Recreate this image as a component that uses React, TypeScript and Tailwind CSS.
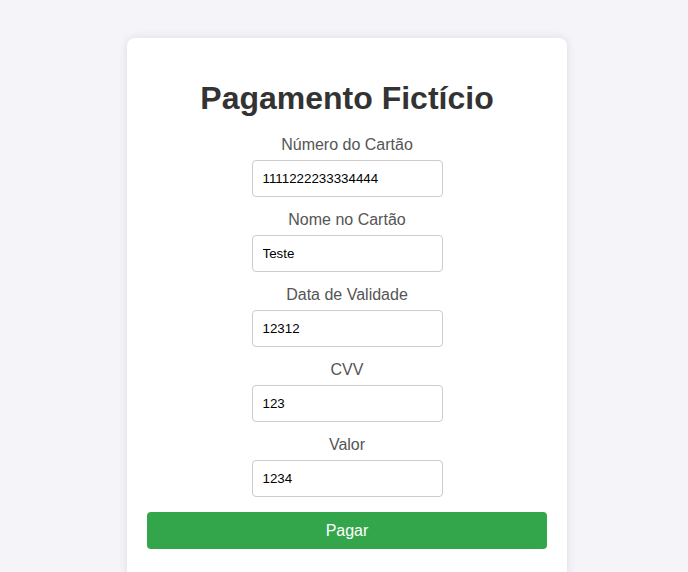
import React from "react";

const fields = [
  { label: "Número do Cartão", value: "1111222233334444" },
  { label: "Nome no Cartão", value: "Teste" },
  { label: "Data de Validade", value: "12312" },
  { label: "CVV", value: "123" },
  { label: "Valor", value: "1234" },
];

export default function App() {
  return (
    <div
      className="min-h-screen bg-[#f4f4f9] pt-[38px] overflow-hidden"
      style={{ fontFamily: '"Liberation Sans", Arial, sans-serif' }}
    >
      <div className="ml-[127px] w-[440px] rounded-[8px] bg-white px-[20px] pt-[20px] pb-[40px] shadow-[0_0_10px_rgba(0,0,0,0.1)]">
        <h1 className="mt-[22px] mb-[5px] text-center text-[32px] font-bold leading-[37px] text-[#333]">
          Pagamento Fictício
        </h1>
        <form className="flex flex-col items-center" onSubmit={(e) => e.preventDefault()}>
          {fields.map((f) => (
            <div key={f.label} className="flex flex-col items-center">
              <label className="mt-[14px] mb-[6px] block text-[16px] leading-[18px] text-[#555]">
                {f.label}
              </label>
              <input
                type="text"
                defaultValue={f.value}
                className="box-border h-[37px] w-[191px] rounded-[4px] border border-[#ccc] bg-white px-[10px] text-[13.33px] text-black outline-none"
              />
            </div>
          ))}
          <button
            type="submit"
            className="mt-[15px] h-[37px] w-full rounded-[4px] bg-[#33a64c] text-[16px] text-white"
          >
            Pagar
          </button>
        </form>
      </div>
    </div>
  );
}
